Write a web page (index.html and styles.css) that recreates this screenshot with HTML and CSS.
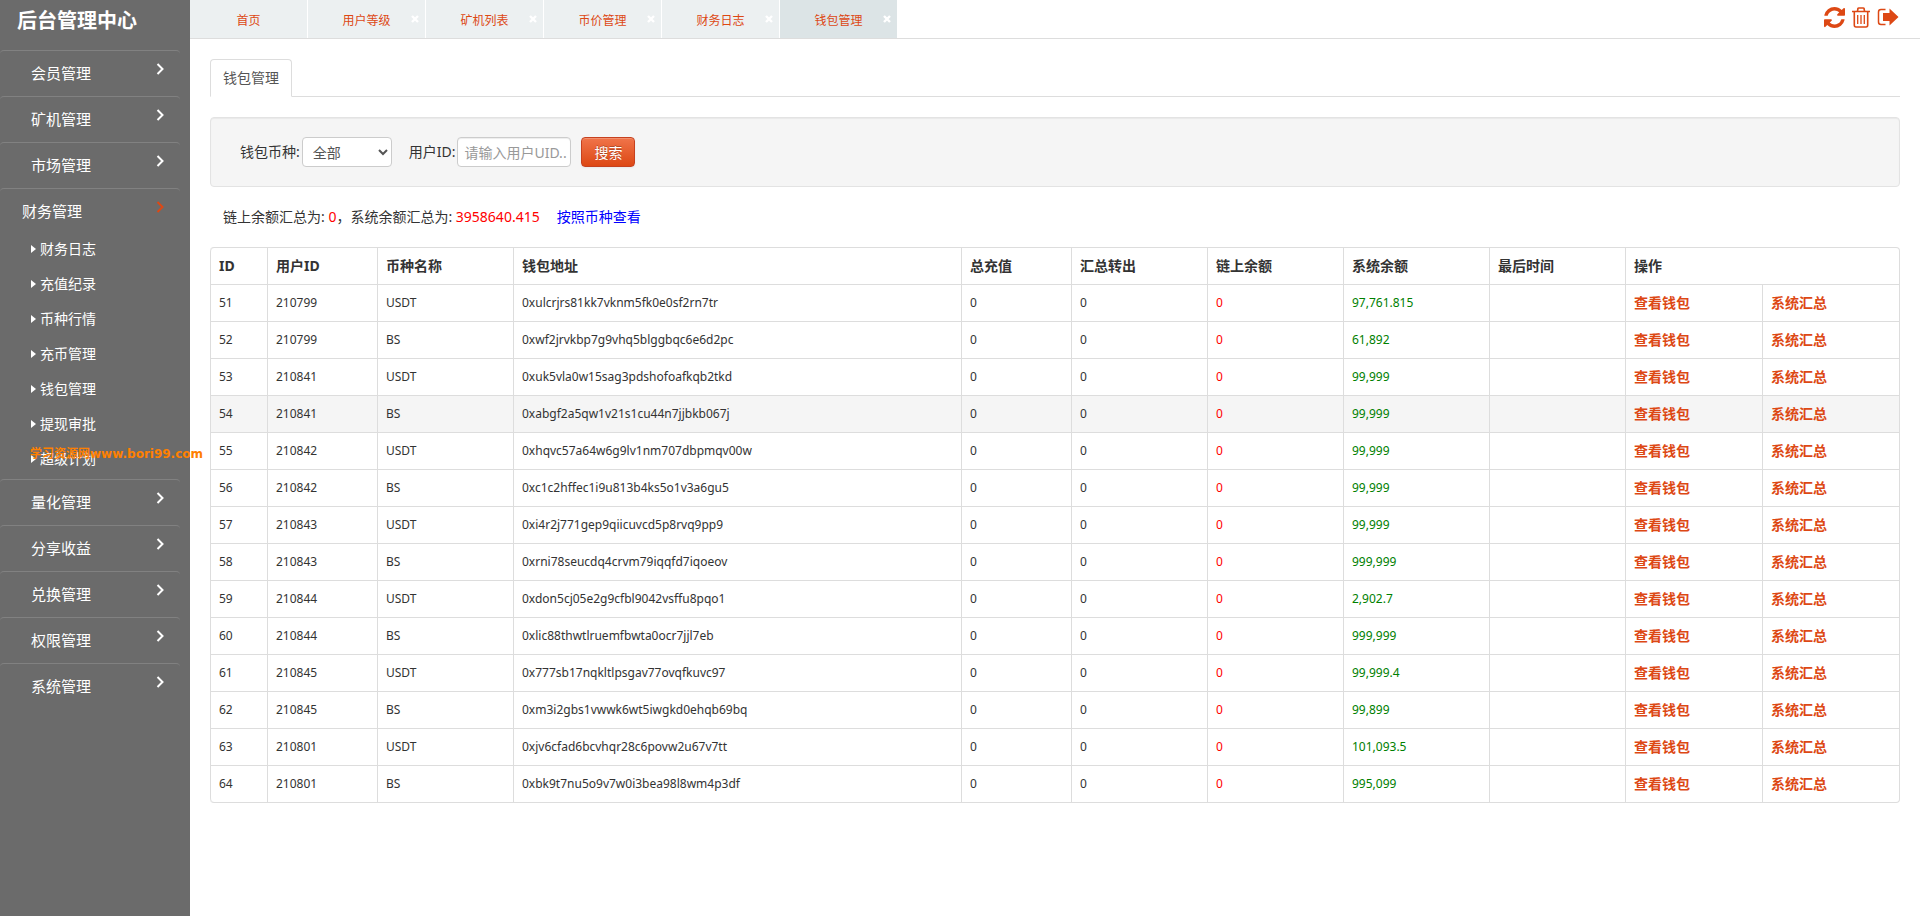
FILE: index.html
```html
<!DOCTYPE html>
<html lang="zh-CN">
<head>
  <meta charset="UTF-8">
  <title>后台管理中心</title>
  <link rel="stylesheet" href="styles.css">
</head>
<body>

<svg class="icons">
  <symbol id="arrow" viewBox="0 0 8 12"><path d="M1.500 1 6.500 6 1.500 11" fill="none" stroke="currentColor" stroke-width="2"/></symbol>
  <symbol id="cross" viewBox="0 0 8 8"><path d="M1 1 7 7M7 1 1 7" fill="none" stroke="currentColor" stroke-width="2.4"/></symbol>
</svg>

<aside class="sidebar">
  <h1>后台管理中心</h1>
  <nav id="menu"></nav>
  <div class="watermark">学习资源网www.bori99.com</div>
</aside>

<main class="main">
  <header class="topbar">
    <div class="tabs" id="tabs"></div>
    <div class="tools">
      <button aria-label="刷新"><svg viewBox="0 0 1536 1536" width="21" height="21"><path fill="currentColor" d="M1511 928q0 5-1 7-64 268-268 434.500T764 1536q-146 0-282.500-55T238 1324l-129 129q-19 19-45 19t-45-19-19-45V960q0-26 19-45t45-19h448q26 0 45 19t19 45-19 45l-137 137q71 66 161 102t187 36q134 0 250-65t186-179q11-17 53-117 8-23 30-23h192q13 0 22.500 9.500t9.500 22.500zM1536 128v448q0 26-19 45t-45 19h-448q-26 0-45-19t-19-45 19-45l138-138Q969 256 768 256q-134 0-250 65T332 500q-11 17-53 117-8 23-30 23H50q-13 0-22.500-9.500T18 608v-7q65-268 270-434.500T768 0q146 0 284 55.500T1297 212l130-129q19-19 45-19t45 19 19 45z"/></svg></button>
      <button aria-label="清除缓存"><svg viewBox="0 0 18 21" width="18" height="21" fill="none" stroke="currentColor"><path stroke-width="1.6" d="M0 4.500H18M5.500 4 6 1.500Q6 1 7 1H11Q12 1 12 1.500L12.500 4M2.300 5V18Q2.300 20 4 20H14Q15.700 20 15.700 18V5"/><path stroke-width="1.300" d="M5.700 8V17M9 8V17M12.300 8V17"/></svg></button>
      <button aria-label="退出"><svg viewBox="0 0 22 18" width="22" height="18"><path fill="none" stroke="currentColor" stroke-width="1.500" d="M8.500 1.500H4Q1.500 1.500 1.500 4V14Q1.500 16.500 4 16.500H8.500"/><path fill="currentColor" d="M6 5H12.500V.5L21.500 9 12.500 17.500V13H6Z"/></svg></button>
    </div>
  </header>

  <section class="content">
    <div class="nav-tabs"><a href="#" class="nav-link">钱包管理</a></div>

    <form class="well">
      <label for="coin">钱包币种:</label>
      <select id="coin"><option>全部</option><option>USDT</option><option>BS</option></select>
      <label for="uid" class="uid-label">用户ID:</label>
      <input type="text" id="uid" placeholder="请输入用户UID..">
      <button type="button" class="btn">搜索</button>
    </form>

    <p class="summary">链上余额汇总为: <span class="red">0</span>，系统余额汇总为: <span class="red">3958640.415</span><a href="#">按照币种查看</a></p>

    <table class="table">
      <colgroup>
        <col class="col-id"><col class="col-s"><col class="col-m"><col>
        <col class="col-s"><col class="col-m"><col class="col-m"><col class="col-l">
        <col class="col-m"><col class="col-op"><col class="col-op">
      </colgroup>
      <thead>
        <tr>
          <th>ID</th><th>用户ID</th><th>币种名称</th><th>钱包地址</th><th>总充值</th><th>汇总转出</th>
          <th>链上余额</th><th>系统余额</th><th>最后时间</th><th colspan="2">操作</th>
        </tr>
      </thead>
      <tbody id="rows"></tbody>
    </table>
  </section>
</main>

<script>
  const menu = [
    ['会员管理'], ['矿机管理'], ['市场管理'],
    ['财务管理', ['财务日志', '充值纪录', '币种行情', '充币管理', '钱包管理', '提现审批', '超级计划']],
    ['量化管理'], ['分享收益'], ['兑换管理'], ['权限管理'], ['系统管理']
  ];
  document.getElementById('menu').innerHTML = menu.map(([name, subs]) => `
    <div class="menu-group${subs ? ' open' : ''}">
      <a href="#" class="menu-item">${name}<svg width="8" height="12"><use href="#arrow"/></svg></a>
      ${subs ? `<div class="submenu">${subs.map(s => `<a href="#">${s}</a>`).join('')}</div>` : ''}
    </div>`).join('');

  const tabs = ['首页', '用户等级', '矿机列表', '币价管理', '财务日志', '钱包管理'];
  document.getElementById('tabs').innerHTML = tabs.map((t, i) => `
    <div class="tab${i === tabs.length - 1 ? ' active' : ''}"><a href="#">${t}</a>${i ? '<button class="close" aria-label="关闭"><svg width="8" height="8"><use href="#cross"/></svg></button>' : ''}</div>`).join('');

  // id, uid, coin, address, balance
  const wallets = [
    [51, 210799, 'USDT', '0xulcrjrs81kk7vknm5fk0e0sf2rn7tr', '97,761.815'],
    [52, 210799, 'BS', '0xwf2jrvkbp7g9vhq5blggbqc6e6d2pc', '61,892'],
    [53, 210841, 'USDT', '0xuk5vla0w15sag3pdshofoafkqb2tkd', '99,999'],
    [54, 210841, 'BS', '0xabgf2a5qw1v21s1cu44n7jjbkb067j', '99,999'],
    [55, 210842, 'USDT', '0xhqvc57a64w6g9lv1nm707dbpmqv00w', '99,999'],
    [56, 210842, 'BS', '0xc1c2hffec1i9u813b4ks5o1v3a6gu5', '99,999'],
    [57, 210843, 'USDT', '0xi4r2j771gep9qiicuvcd5p8rvq9pp9', '99,999'],
    [58, 210843, 'BS', '0xrni78seucdq4crvm79iqqfd7iqoeov', '999,999'],
    [59, 210844, 'USDT', '0xdon5cj05e2g9cfbl9042vsffu8pqo1', '2,902.7'],
    [60, 210844, 'BS', '0xlic88thwtlruemfbwta0ocr7jjl7eb', '999,999'],
    [61, 210845, 'USDT', '0x777sb17nqkltlpsgav77ovqfkuvc97', '99,999.4'],
    [62, 210845, 'BS', '0xm3i2gbs1vwwk6wt5iwgkd0ehqb69bq', '99,899'],
    [63, 210801, 'USDT', '0xjv6cfad6bcvhqr28c6povw2u67v7tt', '101,093.5'],
    [64, 210801, 'BS', '0xbk9t7nu5o9v7w0i3bea98l8wm4p3df', '995,099']
  ];
  document.getElementById('rows').innerHTML = wallets.map(([id, uid, coin, addr, bal]) => `
    <tr${id === 54 ? ' class="hover"' : ''}>
      <td>${id}</td><td>${uid}</td><td>${coin}</td><td>${addr}</td><td>0</td><td>0</td>
      <td class="red">0</td><td class="green">${bal}</td><td></td>
      <td class="op"><a href="#">查看钱包</a></td><td class="op"><a href="#">系统汇总</a></td>
    </tr>`).join('');
</script>

</body>
</html>
```
FILE: styles.css
```css
* {
  box-sizing: border-box;
}
body {
  margin: 0;
  display: flex;
  min-height: 100vh;
  font-family: "Noto Sans", "Noto Sans CJK SC", sans-serif;
  font-size: 14px;
  line-height: 20px;
  color: #333;
  background: #fff;
}
a {
  color: #dd4814;
  text-decoration: none;
}
button {
  font-family: inherit;
  cursor: pointer;
}
.icons {
  display: none;
}
.red {
  color: red;
}
.green {
  color: green;
}

/* sidebar */
.sidebar {
  position: relative;
  flex: none;
  width: 190px;
  background: #6b6b6b;
}
.sidebar h1 {
  margin: 0;
  height: 50px;
  padding-left: 17px;
  font-size: 20px;
  line-height: 42px;
  color: #fff;
}
.menu-group {
  width: 180px;
  border-top: 1px solid #818181;
  border-radius: 4px;
}
.menu-item {
  display: flex;
  justify-content: space-between;
  padding: 12px 16px 13px 31px;
  font-size: 15px;
  color: #fff;
}
.open .menu-item {
  padding-left: 22px;
}
.open .menu-item svg {
  color: #dd4814;
}
.submenu a {
  display: flex;
  align-items: center;
  height: 35px;
  padding: 0 0 6px 31px;
  color: #fff;
}
.submenu a::before {
  content: "";
  margin-right: 4px;
  border: 4px solid transparent;
  border-left: 5px solid #fff;
  border-right: 0;
}
.watermark {
  position: absolute;
  top: 444px;
  left: 30px;
  z-index: 2;
  font: bold 12px/20px "DejaVu Sans", "Noto Sans CJK SC", sans-serif;
  color: #ff8000;
  white-space: nowrap;
}

/* top bar */
.main {
  flex: 1;
  min-width: 0;
}
.topbar {
  display: flex;
  justify-content: space-between;
  height: 39px;
  border-bottom: 1px solid #ddd;
}
.tabs {
  display: flex;
  gap: 1px;
}
.tab {
  position: relative;
  width: 117px;
  padding-top: 11px;
  background: #ecf0f1;
  font-size: 12px;
  text-align: center;
}
.tab.active {
  background: #dce4e6;
}
.close {
  position: absolute;
  top: 15px;
  right: 6px;
  display: flex;
  padding: 0;
  border: 0;
  background: none;
  color: #fff;
}
.tools {
  display: flex;
  align-items: center;
  gap: 7px;
  padding: 0 21px 4px 0;
}
.tools button {
  display: flex;
  padding: 0;
  border: 0;
  background: none;
  color: #dd4814;
}

/* content */
.content {
  padding: 20px;
}
.nav-tabs {
  display: flex;
  margin-bottom: 20px;
  border-bottom: 1px solid #ddd;
}
.nav-link {
  margin-bottom: -1px;
  padding: 8px 12px;
  border: 1px solid #ddd;
  border-bottom-color: #fff;
  border-radius: 4px 4px 0 0;
  color: #555;
  background: #fff;
}
.well {
  display: flex;
  align-items: center;
  height: 70px;
  padding: 0 29px;
  border: 1px solid #e3e3e3;
  border-radius: 4px;
  background: #f5f5f5;
  box-shadow: inset 0 1px 1px rgba(0,0,0,0.05);
}
.well select, .well input {
  height: 30px;
  margin-left: 2px;
  border: 1px solid #ccc;
  border-radius: 4px;
  font: inherit;
  color: #555;
  background: #fff;
}
.well select {
  width: 90px;
  padding: 0 6px;
}
.well input {
  width: 114px;
  padding: 0 0 0 6px;
  box-shadow: inset 0 1px 1px rgba(0,0,0,0.075);
}
.well input::placeholder {
  color: #999;
}
.uid-label {
  margin-left: 17px;
}
.btn {
  height: 30px;
  margin-left: 10px;
  padding: 0 12px;
  border: 1px solid #c6411f;
  border-radius: 4px;
  font-size: 14px;
  color: #fff;
  background: linear-gradient(#f0744a, #dd4814);
  box-shadow: inset 0 1px 0 rgba(255,255,255,0.2), 0 1px 2px rgba(0,0,0,0.05);
  text-shadow: 0 -1px 0 rgba(0,0,0,0.25);
}
.summary {
  margin: 20px 13px;
}
.summary a {
  margin-left: 17px;
  color: blue;
}
.table {
  width: 100%;
  table-layout: fixed;
  border: 1px solid #ddd;
  border-left: 0;
  border-radius: 4px;
  border-collapse: separate;
  border-spacing: 0;
}
.col-id {
  width: 57px;
}
.col-s {
  width: 110px;
}
.col-m {
  width: 136px;
}
.col-op {
  width: 137px;
}
.col-l {
  width: 146px;
}
.table th, .table td {
  padding: 8px;
  border-left: 1px solid #ddd;
  text-align: left;
  vertical-align: top;
}
.table th:first-child {
  border-top-left-radius: 4px;
}
.table tr:last-child td:first-child {
  border-bottom-left-radius: 4px;
}
.table td {
  border-top: 1px solid #ddd;
  font-size: 12px;
}
.table .op {
  font-size: 14px;
  font-weight: bold;
}
.table .hover td, .table tbody tr:hover td {
  background: #f5f5f5;
}
```
